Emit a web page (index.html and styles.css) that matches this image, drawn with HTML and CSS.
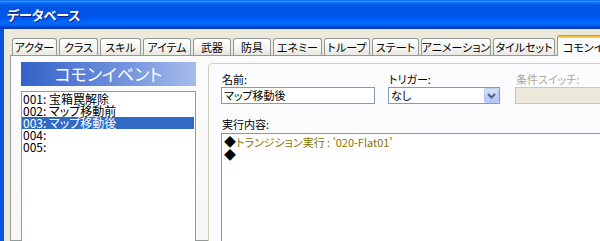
FILE: index.html
```html
<!DOCTYPE html>
<html lang="ja">
<head>
<meta charset="utf-8">
<title>データベース</title>
<link rel="stylesheet" href="styles.css">
</head>
<body>
<div class="window">
  <div class="titlebar"><span class="title">データベース</span></div>
  <div class="frame">
    <div class="tabs">
      <div class="tab">アクター</div>
      <div class="tab">クラス</div>
      <div class="tab">スキル</div>
      <div class="tab">アイテム</div>
      <div class="tab">武器</div>
      <div class="tab">防具</div>
      <div class="tab">エネミー</div>
      <div class="tab">トループ</div>
      <div class="tab">ステート</div>
      <div class="tab">アニメーション</div>
      <div class="tab">タイルセット</div>
      <div class="tab active">コモンイベント</div>
    </div>
    <div class="panel">
      <div class="side">
        <div class="side-head">コモンイベント</div>
        <ul class="list">
          <li>001: 宝箱罠解除</li>
          <li>002: マップ移動前</li>
          <li class="sel">003: マップ移動後</li>
          <li>004:</li>
          <li>005:</li>
        </ul>
      </div>
      <div class="group">
        <div class="fields">
          <div class="field f-name">
            <div class="lbl">名前:</div>
            <div class="box input">マップ移動後</div>
          </div>
          <div class="field f-trigger">
            <div class="lbl">トリガー:</div>
            <div class="box select">
              <span class="sel-text">なし</span>
              <span class="drop"><svg width="9" height="6" viewBox="0 0 9 6"><path d="M1 1 L4.5 4.5 L8 1" fill="none" stroke="#4D6185" stroke-width="2"/></svg></span>
            </div>
          </div>
          <div class="field f-switch">
            <div class="lbl off">条件スイッチ:</div>
            <div class="box disabled"></div>
          </div>
        </div>
        <div class="lbl run-lbl">実行内容:</div>
        <div class="cmds">
          <div class="cmd"><span class="dia">◆</span><span class="c-trans">トランジション実行 : '020-Flat01'</span></div>
          <div class="cmd"><span class="dia">◆</span></div>
        </div>
      </div>
    </div>
  </div>
</div>
</body>
</html>
```
FILE: styles.css
```css
* { box-sizing: border-box; margin: 0; padding: 0; }
html, body { width: 600px; height: 241px; overflow: hidden; }
body {
  font-family: "Noto Sans CJK JP", "Liberation Sans", sans-serif;
  font-size: 11px;
  line-height: 12px;
  font-feature-settings: "palt";
  color: #000;
  background: #ECE9D8;
}
.window { width: 600px; height: 241px; overflow: hidden; display: flex; flex-direction: column; }
.titlebar {
  height: 29px;
  flex: none;
  display: flex;
  align-items: center;
  padding-left: 7px;
  background: linear-gradient(to bottom, #0058EE 0%, #3593FF 4%, #288EFF 6%, #127DFF 8%, #036FFC 10%, #0262EE 14%, #0057E5 20%, #0054E3 24%, #0055EB 56%, #005BF5 66%, #026AFE 76%, #0062EF 86%, #0052D6 92%, #0040AB 96%, #0831D9 100%);
}
.title {
  color: #fff;
  font-weight: bold;
  font-size: 13px;
  line-height: 14px;
  text-shadow: 1px 1px 0 #0A1E8C;
  padding-top: 1px;
}
.frame {
  flex: 1;
  min-height: 0;
  border-left: 4px solid #0855DD;
  background: #ECE9D8;
  padding: 6px 0 0 6px;
  display: flex;
  flex-direction: column;
}
.tabs {
  display: flex;
  align-items: flex-end;
  gap: 2px;
  height: 21px;
  flex: none;
  padding-left: 2px;
  margin-bottom: -1px;
  position: relative;
  z-index: 2;
  overflow: hidden;
}
.tab {
  height: 17px;
  margin-bottom: 1px;
  border: 1px solid #919B9C;
  border-bottom: none;
  border-radius: 3px 3px 0 0;
  background: linear-gradient(to bottom, #FFFFFF, #F3F3EF 60%, #E8E7E1);
  display: flex;
  align-items: center;
  justify-content: center;
  white-space: nowrap;
  line-height: 14px;
  flex: none;
}
.tab:nth-child(1) { width: 45px; }
.tab:nth-child(2) { width: 39px; }
.tab:nth-child(3) { width: 41px; }
.tab:nth-child(4) { width: 48px; }
.tab:nth-child(5) { width: 38px; }
.tab:nth-child(6) { width: 38px; }
.tab:nth-child(7) { width: 49px; }
.tab:nth-child(8) { width: 46px; }
.tab:nth-child(9) { width: 47px; }
.tab:nth-child(10) { width: 70px; }
.tab:nth-child(11) { width: 62px; }
.tab.active {
  width: 100px;
  height: 21px;
  margin-bottom: 0;
  border-top: none;
  background: linear-gradient(to bottom, #E68B2C 0, #E68B2C 1px, #FFC73C 1px, #FFC73C 3px, #FCFCFE 3px);
  padding-top: 2px;
  justify-content: flex-start;
  padding-left: 5px;
}
.panel {
  flex: 1;
  min-height: 0;
  border: 1px solid #919B9C;
  border-right: none;
  background: linear-gradient(to bottom, #FCFCFE, #F4F3EE 300px);
  padding: 6px 0 0 10px;
  display: flex;
  align-items: flex-start;
  position: relative;
  z-index: 1;
}
.side { width: 175px; flex: none; }
.side-head {
  height: 24px;
  background: linear-gradient(to right, #3462CA, #6D8FDC 55%, #A7BCEB);
  color: #fff;
  font-size: 17px;
  line-height: 24px;
  text-align: center;
}
.list {
  list-style: none;
  margin-top: 5px;
  height: 200px;
  border: 1px solid #7F9DB9;
  background: #fff;
  padding-top: 1px;
  font-size: 12px;
}
.list li {
  height: 12px;
  line-height: 12px;
  margin-right: 1px;
  padding-left: 1px;
  white-space: nowrap;
}
.list li.sel { background: #316AC5; color: #fff; }
.group {
  flex: 1;
  margin: 1px 0 0 12px;
  height: 240px;
  border: 1px solid #D0D0BF;
  border-radius: 4px;
  padding: 8px 0 0 12px;
  background: #FCFCFE;
}
.fields { display: flex; }
.field { flex: none; }
.f-name { width: 154px; }
.f-trigger { width: 112px; margin-left: 13px; }
.f-switch { width: 140px; margin-left: 15px; }
.lbl { height: 14px; line-height: 14px; padding-left: 1px; white-space: nowrap; }
.lbl.off { color: #ACA899; }
.box {
  margin-top: 1px;
  height: 17px;
  border: 1px solid #7F9DB9;
  background: #fff;
  line-height: 15px;
  padding-left: 2px;
}
.select { display: flex; align-items: stretch; padding-right: 0; }
.sel-text { flex: 1; }
.drop {
  width: 15px;
  border: 1px solid #B6C9F6;
  border-radius: 2px;
  background: linear-gradient(to bottom, #D6E2FC, #BCCFF9 60%, #B2C7F7);
  display: flex;
  align-items: center;
  justify-content: center;
}
.box.disabled { background: #ECE9D8; border-color: #C9C7BA; }
.run-lbl { margin-top: 13px; }
.cmds {
  margin-top: 2px;
  height: 160px;
  border: 1px solid #7F9DB9;
  background: #fff;
  padding: 1px 0 0 2px;
}
.cmd { height: 13px; line-height: 13px; white-space: nowrap; }
.dia { font-size: 12px; }
.c-trans { color: #857500; }
```
